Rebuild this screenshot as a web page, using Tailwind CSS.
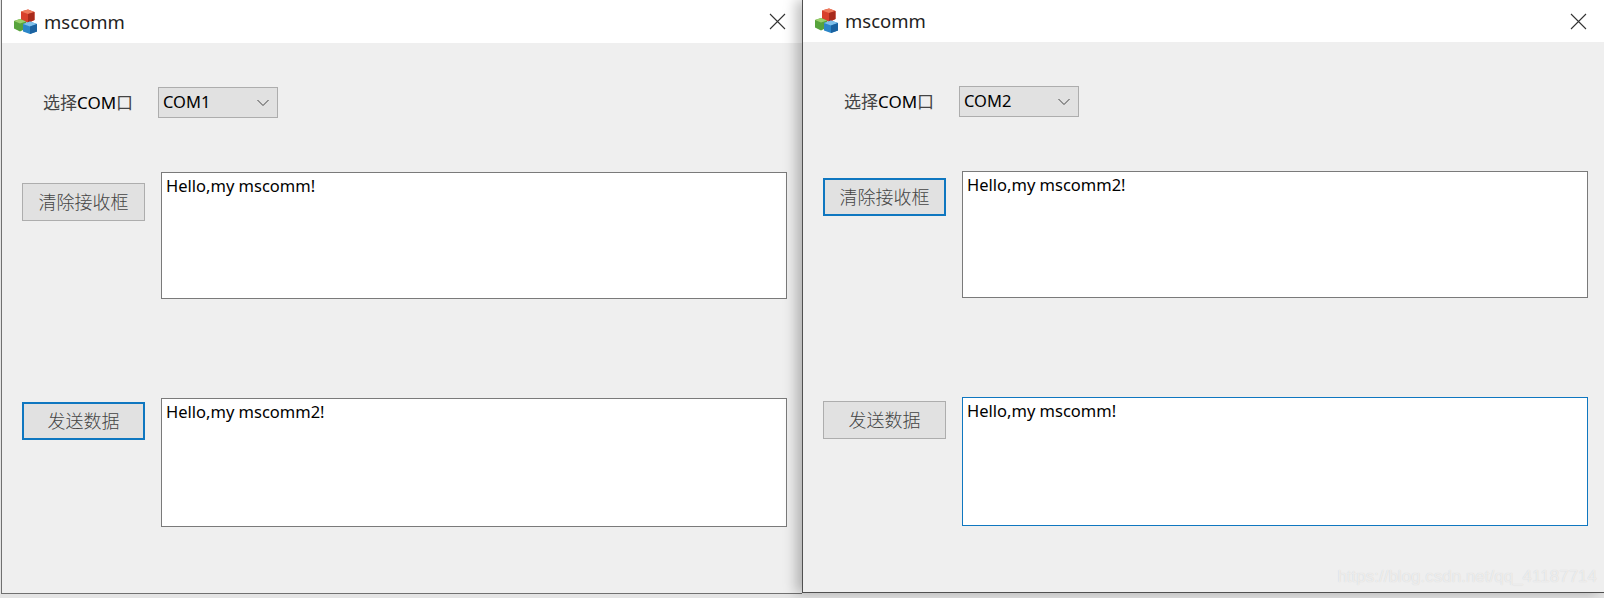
<!DOCTYPE html>
<html lang="zh">
<head>
    <meta charset="UTF-8">
    <title>mscomm</title>
    <script src="https://cdn.jsdelivr.net/npm/@tailwindcss/browser@4"></script>
</head>
<body class="bg-[#e4e4e4] w-[1604px] h-[598px] overflow-hidden font-['Noto_Sans','Noto_Sans_CJK_SC',sans-serif]">
    <svg width="0" height="0" class="absolute">
        <defs>
            <g id="mfc-icon">
                <path d="M8 2.5l7-2 6.500 2.500v8l-6.500 3-7-3z" fill="#d8402c"/>
                <path d="M8 2.500l7 2.500 6.500-2-6.500-2.500z" fill="#ee7a5c"/>
                <path d="M15 5v9l6.500-3V3z" fill="#a82a1c"/>
                <path d="M1 12l6-2 6 2.500v7l-6 3-6-3z" fill="#57a33c"/>
                <path d="M1 12l6 2.500 6-2-6-2.500z" fill="#9bd06c"/>
                <path d="M10 15l7-2.500 7 2.500v7.500l-7 2.500-7-2.500z" fill="#2b86c8"/>
                <path d="M10 15l7 2.500 7-2.500-7-2.500z" fill="#7fc0ea"/>
                <path d="M17 17.500V25l7-2.500V15z" fill="#1b62a0"/>
            </g>
        </defs>
    </svg>

    <div class="flex items-start">
        <!-- fenetre COM1 -->
        <div class="ml-px w-[801px] h-[594px] shrink-0 flex flex-col bg-[#efefef] border-l border-b border-[#707070]">
            <div class="h-[43px] bg-white flex items-center justify-between pl-[11px] pr-[16px]">
                <div class="flex items-center gap-[6px]">
                    <svg width="25" height="26" viewBox="0 0 25 26"><use href="#mfc-icon"/></svg>
                    <span class="text-[18.500px] text-[#222]">mscomm</span>
                </div>
                <svg width="17" height="17" viewBox="0 0 17 17" stroke="#333" stroke-width="1.100"><path d="M1 1l15 15M16 1L1 16"/></svg>
            </div>
            <div class="flex items-center mt-[44px] pl-[41px]">
                <span class="w-[115px] text-[17px] text-[#444]">选择<span class="text-black">COM</span>口</span>
                <div class="w-[120px] h-[31px] bg-[#e1e1e1] border border-[#adadad] flex items-center justify-between pl-[4px] pr-[7px] text-[16.500px] text-black">
                    COM1
                    <svg width="14" height="8" viewBox="0 0 14 8" fill="none" stroke="#444"><path d="M1.500 1l5.500 5.500L12.500 1"/></svg>
                </div>
            </div>
            <div class="flex items-start mt-[54px] pl-[20px]">
                <div class="w-[123px] h-[38px] mt-[11px] bg-[#e1e1e1] border border-[#adadad] flex items-center justify-center text-[18px] font-light text-[#444]">清除接收框</div>
                <div class="ml-[16px] w-[626px] h-[127px] bg-white border border-[#7a7a7a] pl-[4px] text-[16.500px] leading-[26px] text-black">Hello,my mscomm!</div>
            </div>
            <div class="flex items-start mt-[99px] pl-[20px]">
                <div class="w-[123px] h-[38px] mt-[4px] bg-[#e1e1e1] border-2 border-[#0f77c0] flex items-center justify-center text-[18px] font-light text-[#444]">发送数据</div>
                <div class="ml-[16px] w-[626px] h-[129px] bg-white border border-[#7a7a7a] pl-[4px] text-[16.500px] leading-[26px] text-black">Hello,my mscomm2!</div>
            </div>
        </div>

        <!-- fenetre COM2 -->
        <div class="relative w-[802px] h-[593px] shrink-0 flex flex-col bg-[#efefef] border-l border-b border-[#505050] shadow-[-6px_0_12px_rgba(0,0,0,0.25)]">
            <div class="h-[42px] bg-white flex items-center justify-between pl-[11px] pr-[17px]">
                <div class="flex items-center gap-[6px]">
                    <svg width="25" height="26" viewBox="0 0 25 26"><use href="#mfc-icon"/></svg>
                    <span class="text-[18.500px] text-[#222]">mscomm</span>
                </div>
                <svg width="17" height="17" viewBox="0 0 17 17" stroke="#333" stroke-width="1.100"><path d="M1 1l15 15M16 1L1 16"/></svg>
            </div>
            <div class="flex items-center mt-[44px] pl-[41px]">
                <span class="w-[115px] text-[17px] text-[#444]">选择<span class="text-black">COM</span>口</span>
                <div class="w-[120px] h-[31px] bg-[#e1e1e1] border border-[#adadad] flex items-center justify-between pl-[4px] pr-[7px] text-[16.500px] text-black">
                    COM2
                    <svg width="14" height="8" viewBox="0 0 14 8" fill="none" stroke="#444"><path d="M1.500 1l5.500 5.500L12.500 1"/></svg>
                </div>
            </div>
            <div class="flex items-start mt-[54px] pl-[20px]">
                <div class="w-[123px] h-[38px] mt-[7px] bg-[#e1e1e1] border-2 border-[#0f77c0] flex items-center justify-center text-[18px] font-light text-[#444]">清除接收框</div>
                <div class="ml-[16px] w-[626px] h-[127px] bg-white border border-[#7a7a7a] pl-[4px] text-[16.500px] leading-[26px] text-black">Hello,my mscomm2!</div>
            </div>
            <div class="flex items-start mt-[99px] pl-[20px]">
                <div class="w-[123px] h-[38px] mt-[4px] bg-[#e1e1e1] border border-[#adadad] flex items-center justify-center text-[18px] font-light text-[#444]">发送数据</div>
                <div class="ml-[16px] w-[626px] h-[129px] bg-white border border-[#0f77c0] pl-[4px] text-[16.500px] leading-[26px] text-black">Hello,my mscomm!</div>
            </div>
            <!-- filigrane -->
            <span class="absolute right-[7px] bottom-[3px] text-[17px] text-white/60 font-['Liberation_Sans',sans-serif] [text-shadow:0_0_1px_rgba(0,0,0,0.15)]">https://blog.csdn.net/qq_41187714</span>
        </div>
    </div>
</body>
</html>
